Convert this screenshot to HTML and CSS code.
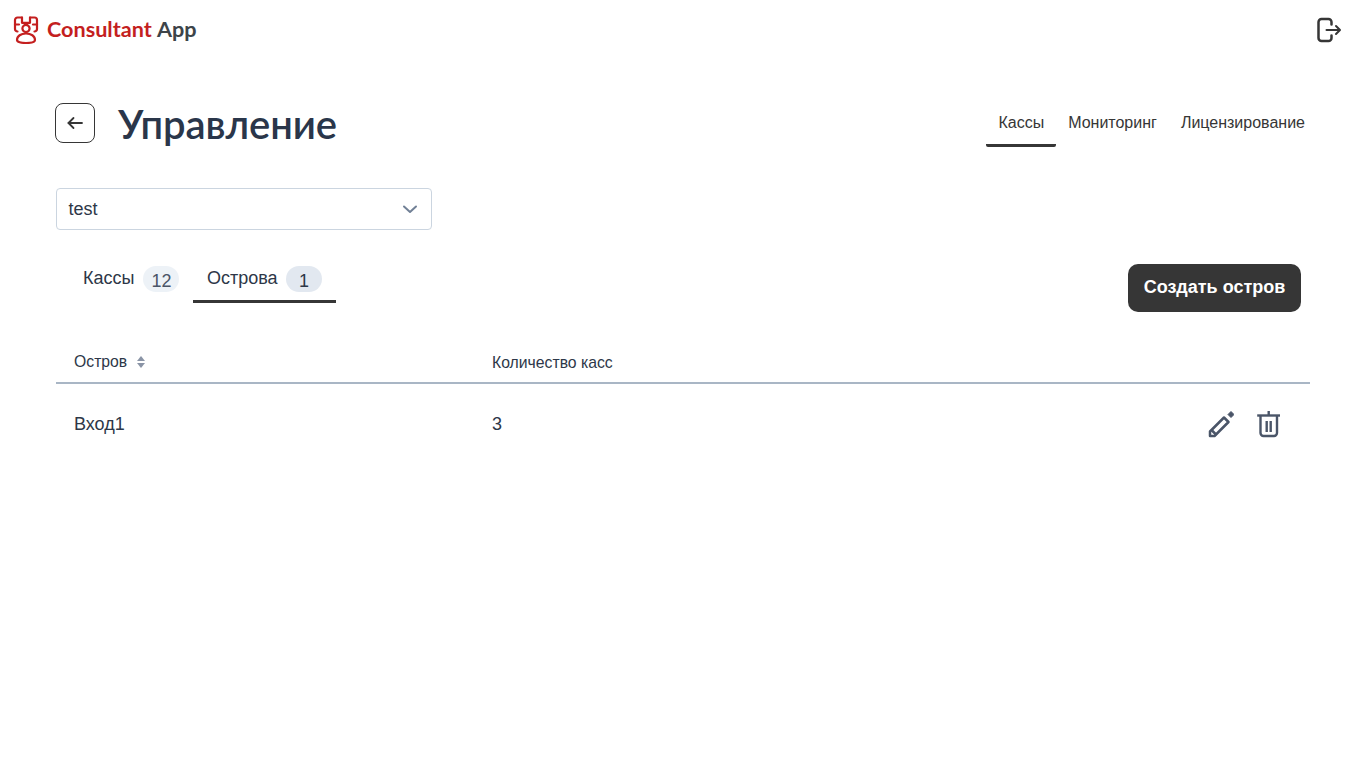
FILE: index.html
```html
<!DOCTYPE html>
<html lang="en">
<head>
    <meta charset="UTF-8">
    <meta name="viewport" content="width=device-width, initial-scale=1.0">
    <title>Consultant App</title>
    <link rel="stylesheet" href="styles.css">
</head>
<body>
    <header class="topbar">
        <a class="logo">
            <svg class="logo-icon" width="26" height="28" viewBox="0 0 26 28" fill="none" stroke="#c41f1f" stroke-width="2.2" stroke-linecap="round" stroke-linejoin="round">
                <path d="M9 1.5H4.500A2.500 2.500 0 0 0 2 4v9a2.500 2.500 0 0 0 2.500 2.500"/>
                <path d="M17 1.5h4.500A2.500 2.500 0 0 1 24 4v9a2.500 2.500 0 0 1-2.500 2.500"/>
                <path d="M9 1.5v5.300h8V1.5"/>
                <path d="M2 8.5h4"/>
                <path d="M20 8.5h4"/>
                <circle cx="13" cy="12.5" r="3.6"/>
                <path d="M4 24c0-4 4-6.500 9-6.500s9 2.500 9 6.500c0 2-4 3-9 3s-9-1-9-3z"/>
            </svg>
            <span class="logo-red">Consultant</span>&nbsp;<span class="logo-dark">App</span>
        </a>
        <button class="logout" type="button">
            <svg width="26" height="26" viewBox="0 0 26 26" fill="none" stroke="#363636" stroke-width="2.5" stroke-linecap="round" stroke-linejoin="round">
                <path d="M15.500 7.500V5a3 3 0 0 0-3-3H5.500a3 3 0 0 0-3 3v16a3 3 0 0 0 3 3h7a3 3 0 0 0 3-3v-2.500"/>
                <path d="M10.500 13H23" stroke-width="2"/>
                <path d="M20 9l4 4-4 4" stroke-width="2"/>
            </svg>
        </button>
    </header>

    <main class="content">
        <div class="page-head">
            <div class="title-group">
                <button class="back-button" type="button">
                    <svg width="18" height="18" viewBox="0 0 18 18" fill="none" stroke="#363636" stroke-width="1.8" stroke-linecap="round" stroke-linejoin="round">
                        <path d="M16 9H2.500"/>
                        <path d="M7.500 4L2.500 9l5 5"/>
                    </svg>
                </button>
                <h1>Управление</h1>
            </div>
            <nav class="page-tabs">
                <a class="page-tab active">Кассы</a>
                <a class="page-tab">Мониторинг</a>
                <a class="page-tab">Лицензирование</a>
            </nav>
        </div>

        <div class="select-box">
            <span>test</span>
            <svg width="16" height="10" viewBox="0 0 16 10" fill="none" stroke="#718096" stroke-width="2" stroke-linecap="round" stroke-linejoin="round">
                <path d="M2 2.500l6 5.500 6-5.500"/>
            </svg>
        </div>

        <div class="toolbar">
            <div class="sub-tabs">
                <a class="sub-tab">Кассы <span class="count">12</span></a>
                <a class="sub-tab active">Острова <span class="count">1</span></a>
            </div>
            <button class="create-button" type="button">Создать остров</button>
        </div>

        <table class="islands">
            <thead>
                <tr>
                    <th class="col-name">
                        <span class="sortable">Остров
                            <svg width="10" height="14" viewBox="0 0 10 14" fill="#8a94a6">
                                <path d="M5 1l4 5H1z"/>
                                <path d="M5 13L1 8h8z"/>
                            </svg>
                        </span>
                    </th>
                    <th class="col-count">Количество касс</th>
                    <th></th>
                </tr>
            </thead>
            <tbody>
                <tr>
                    <td>Вход1</td>
                    <td>3</td>
                    <td class="actions">
                        <svg width="28" height="28" viewBox="0 0 28 28" fill="none" stroke="#4a5568" stroke-width="2.5" stroke-linejoin="round">
                            <path d="M4 26v-4.500L18 7.500l4.500 4.500L8.500 26z"/>
                            <path d="M5.500 20l5 5"/>
                            <path d="M25 1.500l3 3-3 3-3-3z" fill="#4a5568" stroke-width="1"/>
                        </svg>
                        <svg width="24" height="28" viewBox="0 0 24 28" fill="none" stroke="#4a5568" stroke-width="2.4" stroke-linejoin="round">
                            <path d="M1.200 5.500h23"/>
                            <path d="M12.700 1v4.500"/>
                            <path d="M4.500 5.500V23a3 3 0 0 0 3 3h10.500a3 3 0 0 0 3-3V5.500"/>
                            <path d="M10.700 11v11"/>
                            <path d="M14.700 11v11"/>
                        </svg>
                    </td>
                </tr>
            </tbody>
        </table>
    </main>
</body>
</html>
```

FILE: styles.css
```css
body {
    font-family: "Liberation Sans", Arial, sans-serif;
    background-color: #fff;
    color: #2d3748;
    margin: 0;
    padding: 0;
}
button {
    font-family: inherit;
    cursor: pointer;
}
.topbar {
    height: 60px;
    display: flex;
    justify-content: space-between;
    align-items: center;
    padding: 0 22px 0 13px;
}
.logo {
    display: flex;
    align-items: center;
    font-family: Lato, sans-serif;
    font-weight: 700;
    font-size: 21.6px;
    padding-bottom: 3px;
}
.logo-icon {
    margin-right: 8px;
    margin-top: 2px;
}
.logo-red {
    color: #c41f1f;
}
.logo-dark {
    color: #3d4449;
}
.logout {
    background: none;
    border: none;
    padding: 0;
    display: flex;
}
.content {
    padding: 0 54px 0 56px;
}
.page-head {
    display: flex;
    justify-content: space-between;
    align-items: flex-start;
    margin-top: 30px;
}
.title-group {
    display: flex;
    align-items: center;
    gap: 23px;
    margin-left: -1px;
    margin-top: 10px;
}
.back-button {
    width: 40px;
    height: 40px;
    border: 1px solid #363636;
    border-radius: 8px;
    background: #fff;
    padding: 0;
    display: flex;
    align-items: center;
    justify-content: center;
}
h1 {
    font-family: Lato, sans-serif;
    font-weight: 600;
    font-size: 40px;
    line-height: 44px;
    letter-spacing: -0.1px;
    padding-top: 2px;
    margin: 0;
    color: #2a364a;
}
.page-tabs {
    display: flex;
    margin-top: 11px;
    margin-right: -7px;
}
.page-tab {
    font-size: 16px;
    color: #363636;
    padding: 12px;
    line-height: 19px;
    border-bottom: 3px solid transparent;
    border-radius: 2px;
}
.page-tab.active {
    border-bottom-color: #363636;
}
.select-box {
    box-sizing: border-box;
    width: 376px;
    height: 42px;
    margin-top: 41px;
    border: 1px solid #cbd5e0;
    border-radius: 4px;
    display: flex;
    align-items: center;
    justify-content: space-between;
    padding: 0 13px 0 11.5px;
    font-size: 18px;
    color: #2d3748;
}
.toolbar {
    display: flex;
    justify-content: space-between;
    align-items: flex-start;
    margin-top: 34px;
}
.sub-tabs {
    display: flex;
}
.sub-tab {
    font-size: 18px;
    line-height: 22px;
    color: #2d3748;
    padding: 0 14px 8px 13.5px;
    display: flex;
    align-items: center;
    gap: 9px;
    border-bottom: 3px solid transparent;
    height: 39px;
    box-sizing: border-box;
}
.sub-tab:first-child {
    padding-left: 27px;
}
.sub-tab.active {
    border-bottom-color: #363636;
    padding-right: 13.5px;
    gap: 8.5px;
}
.count {
    box-sizing: border-box;
    width: 36px;
    height: 26px;
    padding-top: 4px;
    border-radius: 13px;
    background-color: #edf2f7;
    color: #4a5568;
    display: flex;
    align-items: center;
    justify-content: center;
    position: relative;
    top: 1px;
}
.sub-tab.active .count {
    background-color: #e2e8f0;
    color: #2d3748;
}
.create-button {
    background-color: #363636;
    color: #fff;
    font-size: 18px;
    font-weight: 700;
    border: none;
    border-radius: 10px;
    height: 48px;
    width: 173px;
    margin-right: 9px;
    padding: 0 0 2px;
}
.islands {
    width: 100%;
    border-collapse: collapse;
    margin-top: 30px;
}
.islands th {
    font-size: 15.75px;
    font-weight: 400;
    text-align: left;
    padding: 0 18px;
    height: 40px;
    border-bottom: 2px solid #a9b6c5;
    color: #2d3748;
}
.islands .col-name {
    width: 382px;
}
.islands .col-count {
    height: 38px;
    padding-top: 2px;
}
.sortable {
    display: inline-flex;
    align-items: center;
    gap: 9px;
}
.islands td {
    font-size: 18px;
    padding: 0 18px;
    height: 80px;
    color: #2d3748;
}
.islands td:nth-child(2) {
    width: 560px;
}
.islands td.actions {
    text-align: right;
    padding-right: 30px;
}
.actions svg {
    vertical-align: middle;
    margin-left: 17px;
}
```
